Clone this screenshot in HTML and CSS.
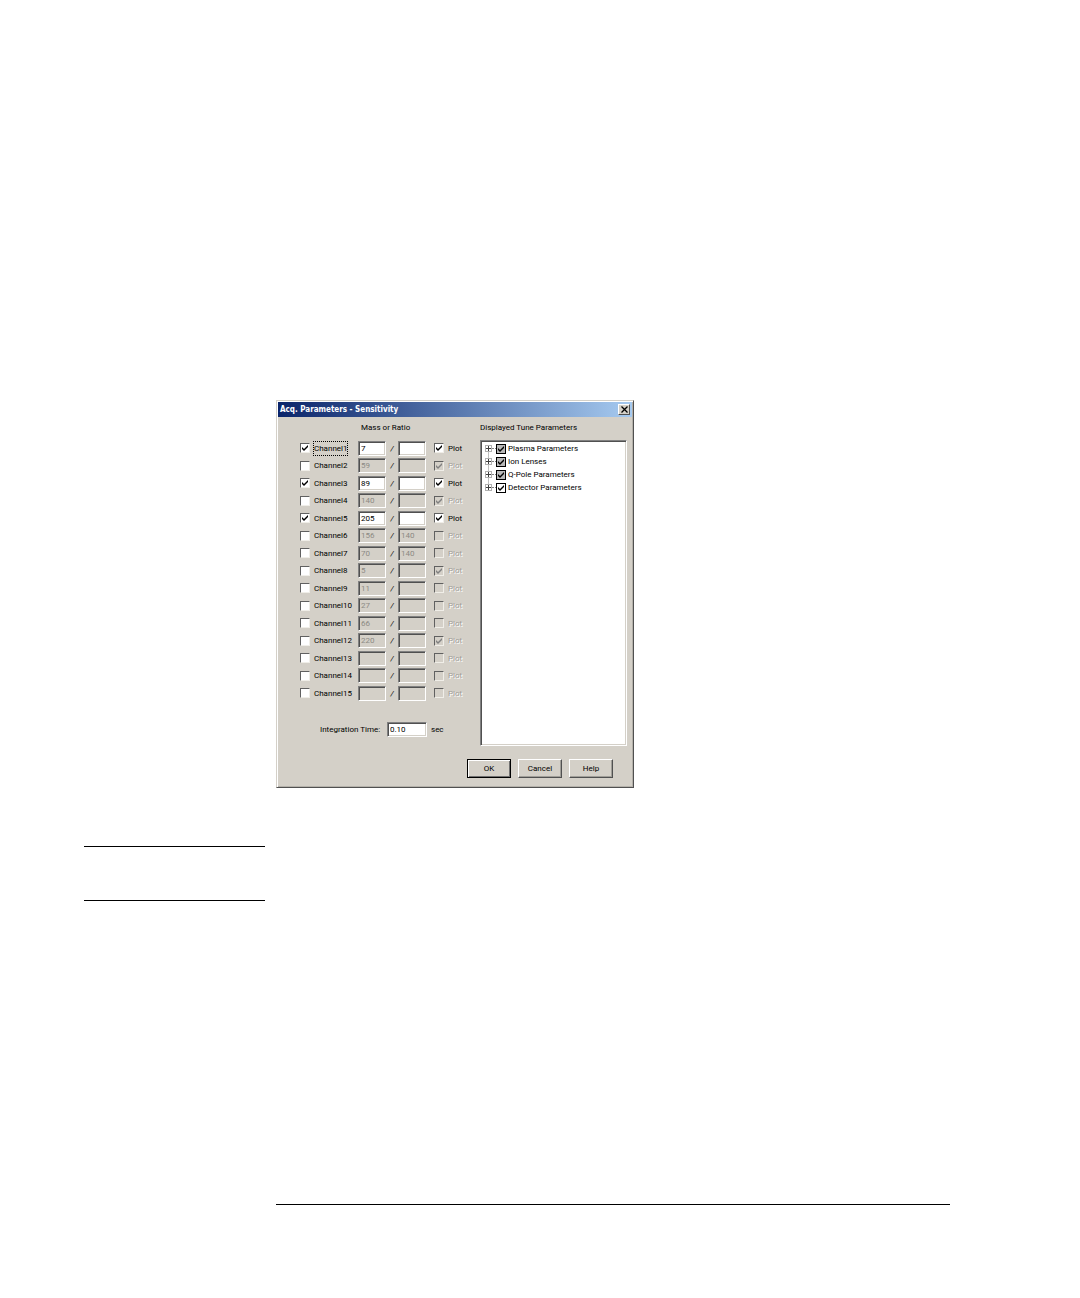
FILE: index.html
```
<!DOCTYPE html>
<html lang="en">
<head>
  <meta charset="UTF-8">
  <meta name="viewport" content="width=device-width, initial-scale=1.0">
  <title>Acq. Parameters - Sensitivity</title>
  <link rel="stylesheet" href="styles.css">
</head>
<body>
  <main class="page">
    <section class="dialog" role="dialog" aria-labelledby="dialog-title">
      <header class="title-bar">
        <h1 id="dialog-title">Acq. Parameters - Sensitivity</h1>
        <button class="close-btn" type="button" aria-label="Close">
          <svg width="7" height="7" viewBox="0 0 7 7"><path d="M0.5 0.5 L6.5 6.5 M6.5 0.5 L0.5 6.5" stroke="#000" stroke-width="1.3"/></svg>
        </button>
      </header>
      <form class="dialog-body">
        <div class="panels">
          <div class="channel-panel">
            <h2>Mass or Ratio</h2>
            <div id="channels" class="channels"></div>
            <div class="integration">
              <label for="integration">Integration Time:</label>
              <input id="integration" class="field" type="text" value="0.10">
              <span>sec</span>
            </div>
          </div>
          <div class="tune-panel">
            <h2>Displayed Tune Parameters</h2>
            <ul class="tree">
              <li><button class="expand" type="button" aria-label="Expand"></button><label><input type="checkbox" class="partial" checked>Plasma Parameters</label></li>
              <li><button class="expand" type="button" aria-label="Expand"></button><label><input type="checkbox" class="partial" checked>Ion Lenses</label></li>
              <li><button class="expand" type="button" aria-label="Expand"></button><label><input type="checkbox" class="partial" checked>Q-Pole Parameters</label></li>
              <li><button class="expand" type="button" aria-label="Expand"></button><label><input type="checkbox" checked>Detector Parameters</label></li>
            </ul>
          </div>
        </div>
        <div class="buttons">
          <button class="btn default" type="button">OK</button>
          <button class="btn" type="button">Cancel</button>
          <button class="btn" type="button">Help</button>
        </div>
      </form>
    </section>
    <aside class="note"></aside>
    <hr class="page-rule">
  </main>
  <script>
    // on: channel is acquired, plot: plot box is ticked
    const channels = [
      { mass: "7", ratio: "", on: true, plot: true },
      { mass: "59", ratio: "", on: false, plot: true },
      { mass: "89", ratio: "", on: true, plot: true },
      { mass: "140", ratio: "", on: false, plot: true },
      { mass: "205", ratio: "", on: true, plot: true },
      { mass: "156", ratio: "140", on: false, plot: false },
      { mass: "70", ratio: "140", on: false, plot: false },
      { mass: "5", ratio: "", on: false, plot: true },
      { mass: "11", ratio: "", on: false, plot: false },
      { mass: "27", ratio: "", on: false, plot: false },
      { mass: "66", ratio: "", on: false, plot: false },
      { mass: "220", ratio: "", on: false, plot: true },
      { mass: "", ratio: "", on: false, plot: false },
      { mass: "", ratio: "", on: false, plot: false },
      { mass: "", ratio: "", on: false, plot: false }
    ];

    const list = document.getElementById("channels");

    channels.forEach((channel, i) => {
      const name = "Channel" + (i + 1);
      const disabled = channel.on ? "" : "disabled";
      const row = document.createElement("div");
      row.className = "channel";
      row.innerHTML = `
        <label class="check"><input type="checkbox" ${channel.on ? "checked" : ""}><span class="${i === 0 ? "focused" : ""}">${name}</span></label>
        <input class="field" type="text" aria-label="${name} mass" value="${channel.mass}" ${disabled}>
        <span class="slash">/</span>
        <input class="field" type="text" aria-label="${name} ratio" value="${channel.ratio}" ${disabled}>
        <label class="check plot"><input type="checkbox" ${channel.plot ? "checked" : ""} ${disabled}><span>Plot</span></label>`;
      list.appendChild(row);
    });

    list.addEventListener("change", event => {
      const row = event.target.closest(".channel");
      const toggle = row.querySelector("input");
      if (event.target !== toggle) return;
      row.querySelectorAll(".field, .plot input").forEach(input => {
        input.disabled = !toggle.checked;
      });
    });
  </script>
</body>
</html>
```
FILE: styles.css
```
* {
  box-sizing: border-box;
}

body {
  margin: 0;
  background: #fff;
  color: #000;
  font-family: Roboto, "Liberation Sans", Arial, sans-serif;
  font-size: 8px;
  line-height: 13px;
}

button,
input {
  margin: 0;
  padding: 0;
  font: inherit;
  color: inherit;
}

h1,
h2 {
  margin: 0;
}

.page {
  padding: 400px 130px 93px 84px;
}

/* Dialog window */
.dialog {
  width: fit-content;
  margin-left: 192px;
  background: #d4d0c8;
  border: 1px solid;
  border-color: #d4d0c8 #505050 #505050 #d4d0c8;
  box-shadow: inset 1px 1px #fff, inset -1px -1px #b4b1aa;
  padding: 1px;
}

.title-bar {
  display: flex;
  align-items: center;
  justify-content: space-between;
  height: 15px;
  padding: 0 2px;
  background: linear-gradient(to right, #0a246a, #a6caf0);
}

.title-bar h1 {
  color: #fff;
  font-family: "DejaVu Sans Condensed", "DejaVu Sans", sans-serif;
  font-size: 8px;
  font-weight: bold;
}

.close-btn {
  display: flex;
  align-items: center;
  justify-content: center;
  width: 12px;
  height: 11px;
  background: #d4d0c8;
  border: 1px solid;
  border-color: #fff #505050 #505050 #fff;
}

.dialog-body {
  padding: 4px 5px 8px 22px;
}

.panels {
  display: flex;
  gap: 18px;
}

h2 {
  font-size: 8px;
  font-weight: normal;
}

/* Channels */
.channel-panel h2 {
  margin-left: 61px;
}

.channels {
  display: grid;
  grid-auto-rows: 18px 17px;
  margin-top: 5px;
}

.channel {
  display: grid;
  grid-template-columns: 58px 28px 12px 28px 36px;
  align-items: center;
}

.channel .plot {
  margin-left: 8px;
}

.check {
  display: flex;
  align-items: center;
  gap: 4px;
}

.focused {
  outline: 1px dotted #000;
}

.slash {
  text-align: center;
  font-style: italic;
}

input[type="checkbox"] {
  appearance: none;
  flex: none;
  width: 10px;
  height: 10px;
  background: #fff center / 6px 6px no-repeat;
  border: 1px solid;
  border-color: #606060 #f0eee8 #f0eee8 #606060;
}

input[type="checkbox"]:checked {
  background-image: url("data:image/svg+xml,%3Csvg xmlns='http://www.w3.org/2000/svg' viewBox='0 0 6 6'%3E%3Cpath d='M0 2v2l2 2 4-4V0L2 4z'/%3E%3C/svg%3E");
}

input[type="checkbox"]:disabled {
  background-color: #d4d0c8;
}

input[type="checkbox"]:checked:disabled {
  background-image: url("data:image/svg+xml,%3Csvg xmlns='http://www.w3.org/2000/svg' viewBox='0 0 6 6'%3E%3Cpath fill='%23808080' d='M0 2v2l2 2 4-4V0L2 4z'/%3E%3C/svg%3E");
}

.check input:disabled + span {
  color: #a09e98;
  text-shadow: 1px 1px #fff;
}

.field {
  width: 100%;
  height: 15px;
  padding: 0 2px;
  background: #fff;
  border: 1px solid;
  border-color: #808080 #fff #fff #808080;
  border-radius: 0;
  box-shadow: inset 1px 1px #505050, inset -1px -1px #d4d0c8;
}

.field:disabled {
  background: #d4d0c8;
  color: #8c8a84;
}

.integration {
  display: flex;
  align-items: center;
  margin: 20px 0 9px 20px;
}

.integration label {
  width: 67px;
  white-space: nowrap;
}

.integration .field {
  width: 40px;
  margin-right: 4px;
}

/* Tune parameter tree */
.tune-panel {
  display: flex;
  flex-direction: column;
}

.tree {
  flex: 1;
  min-width: 147px;
  margin: 6px 0 0;
  padding: 1px 3px;
  list-style: none;
  background: #fff;
  border: 1px solid;
  border-color: #808080 #fff #fff #808080;
  box-shadow: inset 1px 1px #505050, inset -1px -1px #d4d0c8;
}

.tree li {
  display: flex;
  align-items: center;
  height: 13px;
  background: linear-gradient(#c0c0c0, #c0c0c0) 4px 0 / 1px 100% no-repeat;
}

.tree li:first-child {
  background-position: 4px 7px;
}

.tree li:last-child {
  background-size: 1px 7px;
}

.tree li::after {
  content: "";
  order: 1;
  width: 4px;
  border-top: 1px dotted #808080;
}

.tree label {
  display: flex;
  align-items: center;
  order: 2;
  gap: 2px;
}

.tree input[type="checkbox"] {
  border-color: #000;
}

.tree .partial {
  background-color: #b8b8b8;
}

.expand {
  width: 7px;
  height: 7px;
  margin: 0 0 0 1px;
  border: 1px solid #b0b0b0;
  background:
    linear-gradient(#404040, #404040) center / 5px 1px no-repeat,
    linear-gradient(#404040, #404040) center / 1px 5px no-repeat,
    #fff;
}

/* Dialog buttons */
.buttons {
  display: flex;
  justify-content: flex-end;
  gap: 7px;
  margin: 13px 14px 0 0;
}

.btn {
  width: 44px;
  height: 19px;
  background: #d4d0c8;
  border: 1px solid;
  border-color: #fff #505050 #505050 #fff;
  box-shadow: inset -1px -1px #a09e98;
}

.btn.default {
  border-color: #000;
  box-shadow: inset 1px 1px #fff, inset -1px -1px #707070;
}

/* Rules on the page around the dialog */
.note {
  width: 181px;
  height: 55px;
  margin-top: 58px;
  border-top: 1px solid #000;
  border-bottom: 1px solid #000;
}

.page-rule {
  margin: 303px 0 0 192px;
  border: 0;
  border-top: 1px solid #000;
}
```
